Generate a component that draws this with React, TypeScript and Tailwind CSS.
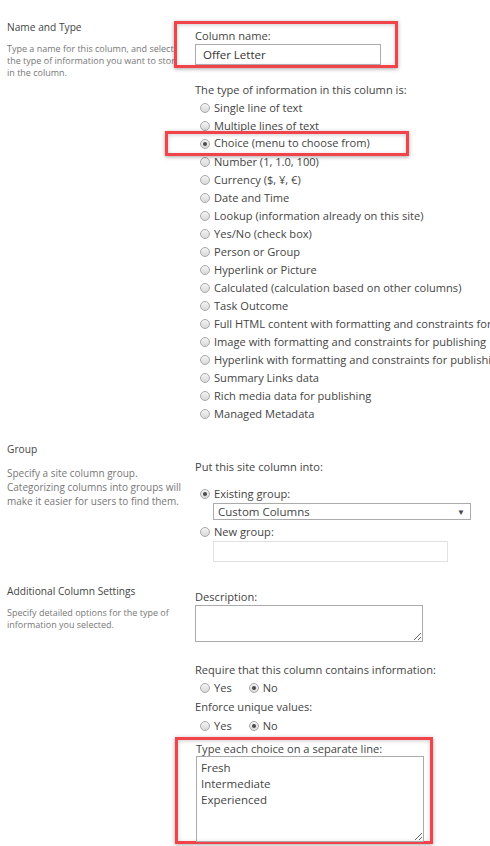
import React from "react"

const font = { fontFamily: '"Open Sans", "Noto Sans", sans-serif' }

function Radio({ checked }: { checked?: boolean }) {
  return (
    <span className="inline-flex w-[10px] h-[10px] shrink-0 items-center justify-center rounded-full border border-[#a9a9a9] bg-gradient-to-b from-[#f4f4f4] to-[#d9d9d9]">
      {checked && <span className="w-[4px] h-[4px] rounded-full bg-[#4a4a4a]" />}
    </span>
  )
}

function Option({ label, checked }: { label: string; checked?: boolean }) {
  return (
    <div className="flex h-[18px] items-center gap-[4px] whitespace-nowrap pl-[5px]">
      <Radio checked={checked} />
      <span>{label}</span>
    </div>
  )
}

const types = [
  "Single line of text",
  "Multiple lines of text",
  "Choice (menu to choose from)",
  "Number (1, 1.0, 100)",
  "Currency ($, ¥, €)",
  "Date and Time",
  "Lookup (information already on this site)",
  "Yes/No (check box)",
  "Person or Group",
  "Hyperlink or Picture",
  "Calculated (calculation based on other columns)",
  "Task Outcome",
  "Full HTML content with formatting and constraints for publishing",
  "Image with formatting and constraints for publishing",
  "Hyperlink with formatting and constraints for publishing",
  "Summary Links data",
  "Rich media data for publishing",
  "Managed Metadata",
]

function Highlight({ className, children }: { className: string; children: React.ReactNode }) {
  return (
    <div className={`relative border-[3px] border-[#f3434a] bg-white shadow-[0_1px_4px_rgba(0,0,0,0.35),inset_0_1px_4px_rgba(0,0,0,0.2)] ${className}`}>
      {children}
    </div>
  )
}

export default function App() {
  return (
    <div className="w-[490px] h-[846px] overflow-hidden bg-white text-[#444] text-[11.1px]" style={font}>
      {/* Name and Type */}
      <div className="flex">
        <div className="w-[188px] shrink-0 pl-[7px] pt-[18px] whitespace-nowrap">
          <div className="text-[10.2px] text-[#444] leading-[18px]">Name and Type</div>
          <div className="mt-[7px] text-[9px] leading-[12px] text-[#777]">
            Type a name for this column, and select
            <br />
            the type of information you want to store
            <br />
            in the column.
          </div>
        </div>
        <div className="relative flex-1 -ml-[14px] pt-[21px]">
          <Highlight className="w-[224px] h-[47px] pl-[18px] pt-[4px]">
            <div className="leading-[16px]">Column name:</div>
            <div className="w-[186px] h-[21px] border border-[#ababab] px-[7px] leading-[19px] text-[11.5px] text-[#333]">
              Offer Letter
            </div>
          </Highlight>
          <div className="pl-[21px] mt-[13px] leading-[18px]">The type of information in this column is:</div>
          <div className="pl-[21px]">
            {types.map((t) =>
              t.startsWith("Choice") ? (
                <Highlight key={t} className="-ml-[30px] -mt-[4px] -mb-[3px] w-[244px] h-[25px] pl-[27px] z-10">
                  <div className="flex h-[19px] items-center gap-[4px] whitespace-nowrap pl-[5px]">
                    <Radio checked />
                    <span>{t}</span>
                  </div>
                </Highlight>
              ) : (
                <Option key={t} label={t} />
              )
            )}
          </div>
        </div>
      </div>

      {/* Group */}
      <div className="flex mt-[17px]">
        <div className="w-[188px] shrink-0 pl-[7px] whitespace-nowrap">
          <div className="text-[10.2px] leading-[18px]">Group</div>
          <div className="mt-[8px] text-[10px] leading-[14px] text-[#777]">
            Specify a site column group.
            <br />
            Categorizing columns into groups will
            <br />
            make it easier for users to find them.
          </div>
        </div>
        <div className="flex-1 pl-[7px] pt-[18px]">
          <div className="leading-[18px]">Put this site column into:</div>
          <div className="mt-[9px]">
            <Option label="Existing group:" checked />
            <div className="ml-[18px] flex w-[258px] h-[17px] items-center justify-between border border-[#ababab] pl-[4px] pr-[5px] text-[11.5px] leading-[15px]">
              <span>Custom Columns</span>
              <span className="text-[8px] text-[#444]">▼</span>
            </div>
            <div className="mt-[3px]">
              <Option label="New group:" />
            </div>
            <div className="ml-[18px] w-[235px] h-[21px] border border-[#e1e1e1]" />
          </div>
        </div>
      </div>

      {/* Additional Column Settings */}
      <div className="flex mt-[20px]">
        <div className="w-[188px] shrink-0 pl-[7px] whitespace-nowrap">
          <div className="text-[10.2px] leading-[18px]">Additional Column Settings</div>
          <div className="mt-[7px] text-[9px] leading-[12px] text-[#777]">
            Specify detailed options for the type of
            <br />
            information you selected.
          </div>
        </div>
        <div className="flex-1 pl-[7px] pt-[7px]">
          <div className="leading-[16px]">Description:</div>
          <textarea
            readOnly
            className="block w-[228px] h-[37px] border border-[#ababab] resize-y outline-none"
          />
          <div className="mt-[19px] leading-[18px]">Require that this column contains information:</div>
          <div className="flex">
            <Option label="Yes" />
            <div className="ml-[12px]">
              <Option label="No" checked />
            </div>
          </div>
          <div className="leading-[20px]">Enforce unique values:</div>
          <div className="flex">
            <Option label="Yes" />
            <div className="ml-[12px]">
              <Option label="No" checked />
            </div>
          </div>
        </div>
      </div>

      {/* Choices */}
      <div className="flex">
        <div className="w-[175px] shrink-0" />
        <Highlight className="mt-[2px] w-[258px] h-[107px] pl-[18px] pt-[1px]">
          <div className="leading-[15px]">Type each choice on a separate line:</div>
          <textarea
            readOnly
            defaultValue={"Fresh\nIntermediate\nExperienced"}
            className="block w-[228px] h-[86px] border border-[#ababab] px-[4px] pt-[3px] text-[11.5px] leading-[16px] text-[#444] resize-y outline-none"
            style={font}
          />
        </Highlight>
      </div>
    </div>
  )
}
